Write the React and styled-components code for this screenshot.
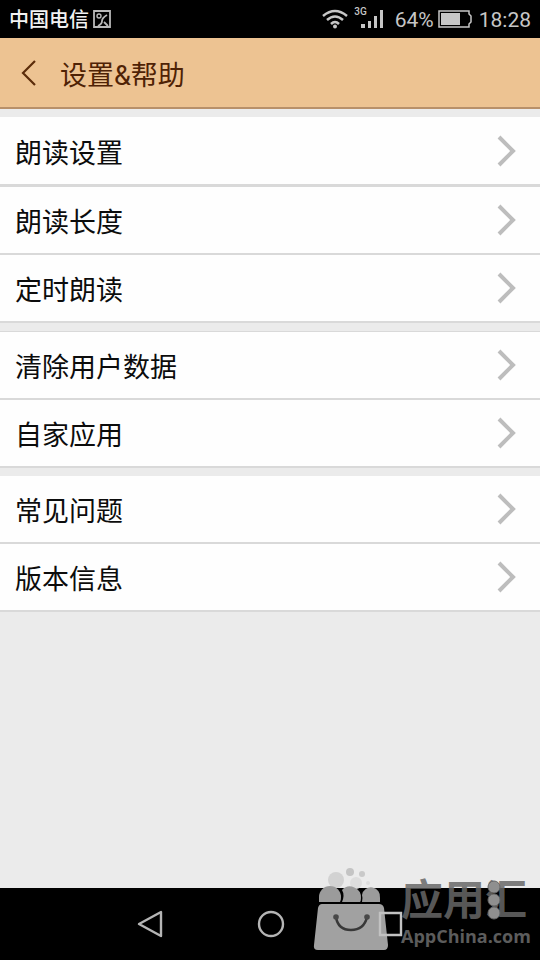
import React from "react";
import styled, { createGlobalStyle } from "styled-components";

const GlobalStyle = createGlobalStyle`
  * { box-sizing: border-box; }
  body {
    margin: 0;
    background: #ebebeb;
    font-family: Roboto, "Noto Sans CJK SC", sans-serif;
  }
`;

const Screen = styled.div`
  display: flex;
  flex-direction: column;
  min-height: 100vh;
  background: #ebebeb;
`;

const StatusBar = styled.div`
  display: flex;
  align-items: center;
  justify-content: space-between;
  height: 38px;
  padding: 0 9px;
  background: #000;
  color: #c6c6c6;
`;

const StatusGroup = styled.div`
  display: flex;
  align-items: center;
  gap: 4px;
  svg { display: block; }
`;

const Carrier = styled.span`
  color: #f2f2f2;
  font: 500 20px/24px "Noto Sans CJK SC", sans-serif;
`;

const StatusText = styled.span`
  font-size: 21px;
  line-height: 24px;
  padding-top: 2px;
  margin-left: ${(p) => p.$space || 0}px;
`;

const Signal = styled.div`
  display: flex;
  align-items: flex-end;
  height: 22px;
  margin-right: 6px;
`;

const Network = styled.span`
  align-self: flex-start;
  font-size: 10px;
  font-weight: 500;
  line-height: 8px;
  margin: 0 -6px 0 2px;
`;

const Header = styled.header`
  display: flex;
  align-items: center;
  height: 71px;
  padding: 2px 20px 0;
  gap: 22px;
  background: #edc392;
  border-bottom: 2px solid #b8906a;
`;

const BackButton = styled.button`
  display: flex;
  padding: 0;
  border: 0;
  background: none;
  color: #5c2c0a;
`;

const Title = styled.h1`
  margin: 0;
  padding-top: 4px;
  color: #4f2205;
  font: 400 27px/36px Roboto, "Noto Sans CJK SC", sans-serif;
`;

const Settings = styled.main`
  flex: 1;
  display: flex;
  flex-direction: column;
  gap: 8px;
  padding-top: 8px;
`;

const Group = styled.section`
  display: flex;
  flex-direction: column;
  border-top: ${(p) => (p.$ruled ? "1px solid #d9d9d9" : "0")};
`;

const Row = styled.button`
  display: flex;
  align-items: center;
  justify-content: space-between;
  width: 100%;
  height: ${(p) => (p.$thick ? 70 : 68)}px;
  padding: 0 23px 0 15px;
  border: 0;
  border-bottom: ${(p) => (p.$thick ? 3 : 2)}px solid #d9d9d9;
  background: #fefefe;
  color: #0c0c0c;
  font: 400 27px/36px "Noto Sans CJK SC", sans-serif;
  text-align: left;
`;

const RowLabel = styled.span`
  padding-top: 2px;
`;

const NavBar = styled.nav`
  display: flex;
  align-items: center;
  justify-content: center;
  gap: 92px;
  height: 72px;
  background: #000;
  position: relative;
`;

const NavButton = styled.button`
  display: flex;
  padding: 0;
  border: 0;
  background: none;
  position: relative;
  z-index: 1;
`;

const Watermark = styled.div`
  position: absolute;
  right: 9px;
  bottom: 8px;
  display: flex;
  align-items: flex-end;
  gap: 12px;
  pointer-events: none;
  svg { display: block; }
`;

const Brand = styled.div`
  display: flex;
  flex-direction: column;
  gap: 3px;
  width: 130px;
  padding-bottom: 4px;
`;

const BrandName = styled.span`
  position: relative;
  color: rgba(104, 104, 104, 0.85);
  font: 700 42px/48px "Noto Sans CJK SC", sans-serif;
`;

const BrandDots = styled.svg`
  position: absolute;
  left: 86px;
  top: 6px;
`;

const BrandSite = styled.span`
  color: #5c5c5c;
  font: 700 18px/24px "Open Sans", sans-serif;
`;

const groups = [
  { items: ["朗读设置", "朗读长度", "定时朗读"], thickFirst: true },
  { items: ["清除用户数据", "自家应用"], ruled: true },
  { items: ["常见问题", "版本信息"] },
];

function Chevron() {
  return (
    <svg width="20" height="32" viewBox="0 0 20 32" fill="none" stroke="#bdbdbd" strokeWidth="4" aria-hidden="true">
      <path d="M2 2 16 16 2 30" />
    </svg>
  );
}

function Bag() {
  return (
    <svg width="76" height="84" viewBox="0 0 76 84" aria-hidden="true">
      <g fill="#d2d2d2">
        <circle cx="23" cy="12" r="8" />
        <circle cx="37" cy="4" r="4" fill="#c4c4c4" />
        <circle cx="49" cy="6" r="3" fill="#c9c9c9" />
        <circle cx="43" cy="15" r="6" fill="#dddddd" />
        <circle cx="55" cy="15" r="2" fill="#dddddd" />
      </g>
      <g fill="#9b9b9b">
        <path d="M6 34V29a11 11 0 0 1 22 0q0 4-1 5Z" />
        <path d="M29 34q3-7 0-12a11 11 0 0 1 19 8q0 3-1 4Z" />
        <path d="M49 34q1-4 0-7a9 9 0 0 1 18 3v4Z" />
      </g>
      <path d="M9 36H66q4 0 5 4L75 77q0 5-4 5H5q-5 0-4-5L5 40q1-4 4-4Z" fill="#a1a1a1" />
      <path d="M23 49q2 13 15 13t16-13" fill="none" stroke="#383838" strokeWidth="2.5" />
      <circle cx="23" cy="49" r="2.8" fill="#484848" />
      <circle cx="54" cy="49" r="2.8" fill="#484848" />
    </svg>
  );
}

export default function App() {
  return (
    <Screen>
      <GlobalStyle />
      <StatusBar>
        <StatusGroup>
          <Carrier>中国电信</Carrier>
          <svg width="18" height="18" viewBox="0 0 18 18" fill="none" stroke="#b9b9b9" strokeWidth="1.8" aria-hidden="true">
            <path d="M1 1H17V17H1ZM5 16Q9 14 9 11T14 5M11 12 15 16" />
            <circle cx="6" cy="6" r="2" strokeWidth="1.4" />
          </svg>
        </StatusGroup>
        <StatusGroup>
          <svg width="26" height="20" viewBox="0 0 26 20" fill="none" stroke="#c6c6c6" strokeWidth="2.5" aria-hidden="true">
            <path d="M1 7Q13-3 25 7M5 11Q13 4 21 11M9 15Q13 11 17 15" />
            <circle cx="13" cy="17.5" r="2" fill="#c6c6c6" stroke="none" />
          </svg>
          <Signal>
            <Network>3G</Network>
            <svg width="24" height="20" viewBox="0 0 24 20" fill="#c6c6c6" aria-hidden="true">
              <path d="M0 14H4V18H0ZM7 11H10V18H7ZM13 6H16V18H13ZM19 0H22V18H19Z" />
            </svg>
          </Signal>
          <StatusText>64%</StatusText>
          <svg width="34" height="18" viewBox="0 0 34 18" aria-hidden="true">
            <path d="M1 1H31V4L33 6V12L31 14V17H1Z" fill="none" stroke="#c6c6c6" strokeWidth="1.5" />
            <path d="M3 3H22V15H3Z" fill="#c6c6c6" />
          </svg>
          <StatusText $space={3}>18:28</StatusText>
        </StatusGroup>
      </StatusBar>
      <Header>
        <BackButton aria-label="返回">
          <svg width="18" height="28" viewBox="0 0 18 28" fill="none" stroke="currentColor" strokeWidth="2.2" aria-hidden="true">
            <path d="M15 1 3 13 15 25" />
          </svg>
        </BackButton>
        <Title>设置&amp;帮助</Title>
      </Header>
      <Settings>
        {groups.map((group) => (
          <Group key={group.items[0]} $ruled={group.ruled}>
            {group.items.map((item, i) => (
              <Row key={item} $thick={group.thickFirst && i === 0}>
                <RowLabel>{item}</RowLabel>
                <Chevron />
              </Row>
            ))}
          </Group>
        ))}
      </Settings>
      <NavBar>
        <NavButton aria-label="后退">
          <svg width="28" height="30" viewBox="0 0 28 30" fill="none" stroke="#b5b5b5" strokeWidth="2.4" strokeLinejoin="round">
            <path d="M4 15 26 3V27Z" />
          </svg>
        </NavButton>
        <NavButton aria-label="主屏幕">
          <svg width="30" height="30" viewBox="0 0 30 30" fill="none" stroke="#b5b5b5" strokeWidth="2.4">
            <circle cx="16" cy="15" r="12" />
          </svg>
        </NavButton>
        <NavButton aria-label="最近任务">
          <svg width="28" height="30" viewBox="0 0 28 30" fill="none" stroke="#c2c2c2" strokeWidth="2.4">
            <path d="M3 4H24V26H3Z" />
          </svg>
        </NavButton>
        <Watermark>
          <Bag />
          <Brand>
            <BrandName>
              应用汇
              <BrandDots width="14" height="42" viewBox="0 0 14 42" fill="#8f8f8f" stroke="#666" aria-hidden="true">
                <circle cx="7" cy="8" r="6" />
                <circle cx="7" cy="21" r="6" />
                <circle cx="7" cy="34" r="6" />
              </BrandDots>
            </BrandName>
            <BrandSite>AppChina.com</BrandSite>
          </Brand>
        </Watermark>
      </NavBar>
    </Screen>
  );
}
